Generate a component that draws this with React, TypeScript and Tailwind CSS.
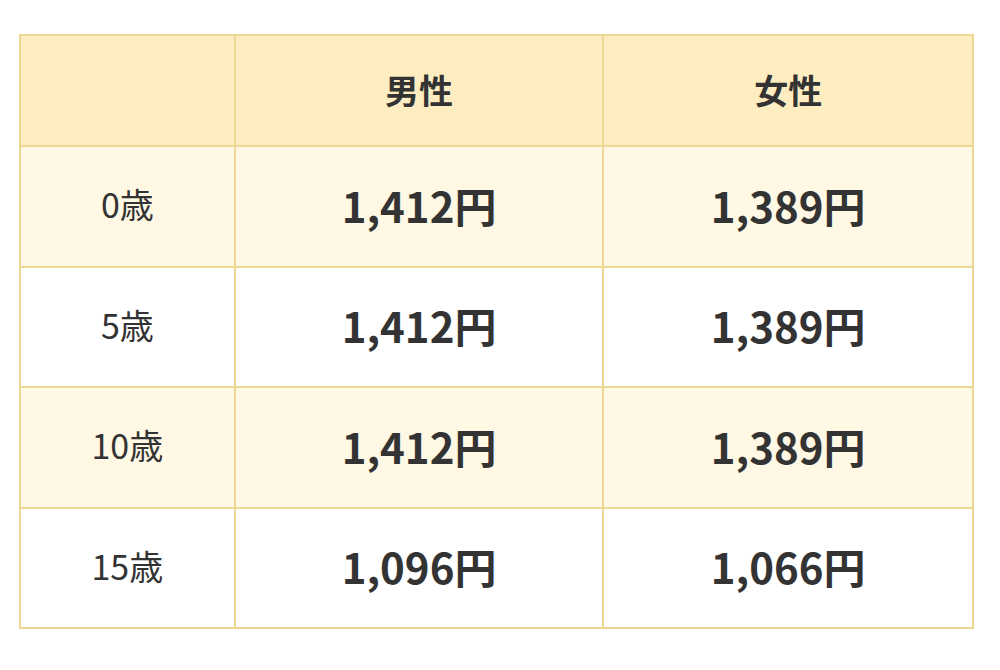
import React from "react";

const rows = [
  { age: "0歳", m: "1,412円", f: "1,389円" },
  { age: "5歳", m: "1,412円", f: "1,389円" },
  { age: "10歳", m: "1,412円", f: "1,389円" },
  { age: "15歳", m: "1,096円", f: "1,066円" },
];

export default function App() {
  return (
    <div
      className="w-[1000px] h-[670px] bg-white pt-[34px] pl-[19px]"
      style={{ fontFamily: '"Noto Sans CJK JP", "Noto Sans", sans-serif' }}
    >
      <table className="border-collapse text-[#333] w-[955px]">
        <thead>
          <tr className="bg-[#feedc0] h-[111px]">
            <th className="border-2 border-[#ecd893] w-[215px]"></th>
            <th className="border-2 border-[#ecd893] w-[369px] text-[34px] font-bold pb-[2px]">男性</th>
            <th className="border-2 border-[#ecd893] w-[370px] text-[34px] font-bold pb-[2px]">女性</th>
          </tr>
        </thead>
        <tbody>
          {rows.map((r, i) => (
            <tr key={i} className={`h-[120.5px] ${i % 2 === 0 ? "bg-[#fff8e5]" : "bg-white"}`}>
              <td className="border-2 border-[#ecd893] text-center text-[34px] pb-[5px]">{r.age}</td>
              <td className="border-2 border-[#ecd893] text-center text-[42px] font-bold pb-[4px]">{r.m}</td>
              <td className="border-2 border-[#ecd893] text-center text-[42px] font-bold pb-[4px]">{r.f}</td>
            </tr>
          ))}
        </tbody>
      </table>
    </div>
  );
}
